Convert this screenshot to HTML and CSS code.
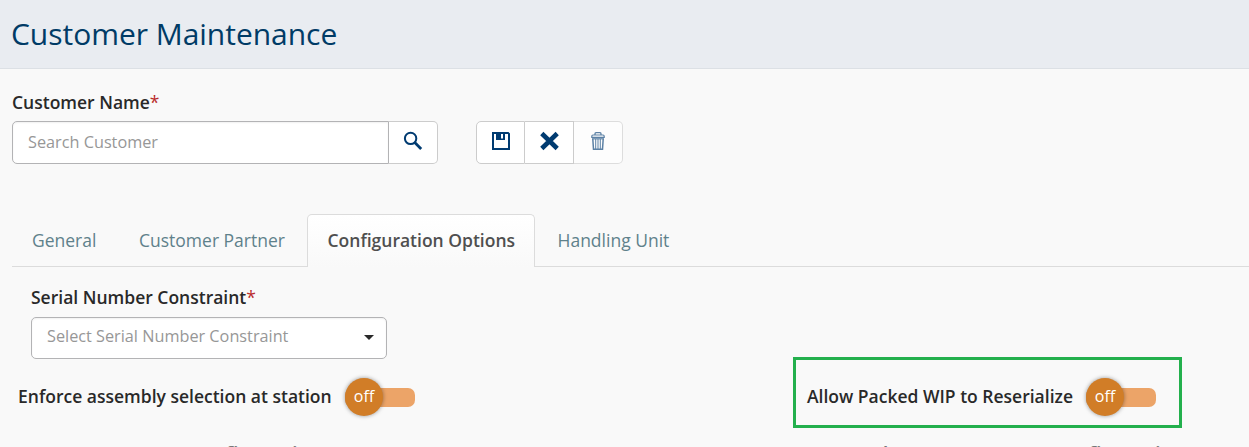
FILE: index.html
```
<!DOCTYPE html>
<html lang="en">
<head>
<meta charset="utf-8">
<title>Customer Maintenance</title>
<link rel="stylesheet" href="styles.css">
</head>
<body>
<header class="page-header"><h1 class="title">Customer Maintenance</h1></header>
<main class="content">
  <label class="label name-label"><span>Customer Name</span><span class="required">*</span></label>
  <div class="toolbar">
    <div class="search">
      <div class="search-input"><span class="placeholder">Search Customer</span></div>
      <button class="btn search-btn" aria-label="Search"><svg width="20" height="20" viewBox="0 0 20 20" fill="none" stroke="#003b71"><circle cx="7.6" cy="7.4" r="5.7" stroke-width="2"/><path d="M11.5 11.3L18.2 18" stroke-width="2.8"/></svg></button>
    </div>
    <div class="actions">
      <button class="btn" aria-label="Save"><svg width="18" height="18" viewBox="0 0 18 18"><path fill="#003b71" fill-rule="evenodd" d="M0 0H16.5L18 1.5V18H0ZM2 2V16H16V2H13V8H4V2ZM9 2V6.5H11V2Z"/></svg></button>
      <button class="btn" aria-label="Clear"><svg width="20" height="20" viewBox="0 0 20 20"><path d="M2.8 2.5L18.2 17.5M18.2 2.5L2.8 17.5" stroke="#003b71" stroke-width="4.6"/></svg></button>
      <button class="btn disabled" aria-label="Delete"><svg width="14" height="18" viewBox="0 0 14 18" fill="none" stroke="#5c81a5"><path d="M4 3V1.7Q4 .7 5 .7H9Q10 .7 10 1.7V3" stroke-width="1.3"/><path d="M.8 5.3V4.3Q.8 3 2 3H12Q13.2 3 13.2 4.3V5.3Z" stroke-width="1.2"/><path d="M1.8 7L2.5 17.2H11.5L12.2 7" stroke-width="1.5"/><path d="M1 6.8H13" stroke-width="1.2"/><path d="M4.7 7V17M7 7V17M9.3 7V17" stroke-width="1"/></svg></button>
    </div>
  </div>
  <nav class="tabs">
    <a class="tab">General</a>
    <a class="tab">Customer Partner</a>
    <a class="tab active">Configuration Options</a>
    <a class="tab">Handling Unit</a>
  </nav>
  <section class="panel">
    <label class="label serial-label"><span>Serial Number Constraint</span><span class="required">*</span></label>
    <div class="select"><span class="placeholder">Select Serial Number Constraint</span><i class="caret"></i></div>
  </section>
</main>
<section class="options">
  <div class="option left"><span class="label">Enforce assembly selection at station</span><div class="switch"><span class="knob">off</span></div></div>
  <div class="option highlighted"><span class="label">Allow Packed WIP to Reserialize</span><div class="switch"><span class="knob">off</span></div></div>
</section>
<section class="groups">
  <h2 class="group first">Configuration</h2>
  <h2 class="group second">Package</h2>
  <h2 class="group third">Configuration</h2>
</section>
</body>
</html>
```
FILE: styles.css
```
* { box-sizing: border-box; }
body {
  margin: 0;
  width: 1249px;
  height: 447px;
  overflow: hidden;
  background: #f9f9f9;
  color: #292929;
  font-family: "Open Sans", sans-serif;
}
.page-header {
  height: 69px;
  padding: 13px 0 0 11px;
  background: #e9ecf1;
  border-bottom: 1px solid #dce0e5;
}
.title {
  margin: 0;
  color: #003b66;
  font-size: 30px;
  line-height: 42px;
  font-weight: 400;
  letter-spacing: -0.03px;
}
.content { padding-left: 12px; }
.label {
  display: block;
  font-size: 17.5px;
  line-height: 24px;
  font-weight: 600;
  white-space: nowrap;
}
.name-label { padding-top: 21px; height: 52px; }
.required { color: #b92c2c; font-weight: 400; }
.toolbar { display: flex; gap: 38px; height: 43px; }
.search { display: flex; width: 426px; }
.search-input {
  width: 377px;
  padding: 9px 15px;
  background: #fff;
  border: 1px solid #b3b3b5;
  border-radius: 5px 0 0 5px;
  box-shadow: inset 0 1px 2px #0000000f;
}
.placeholder {
  display: block;
  color: #979797;
  font-size: 16.25px;
  line-height: 22px;
  white-space: nowrap;
}
.btn {
  display: flex;
  align-items: center;
  justify-content: center;
  width: 49px;
  height: 43px;
  padding: 0 0 4px;
  background: #fff;
  border: 1px solid #ccc;
  border-left: 0;
}
.search-btn { border-radius: 0 5px 5px 0; }
.actions { display: flex; }
.actions .btn:first-child { border-left: 1px solid #ccc; border-radius: 5px 0 0 5px; }
.actions .disabled { border-color: #ddd; border-radius: 0 5px 5px 0; background: #fdfdfd; }
.tabs {
  display: flex;
  height: 53px;
  margin-top: 50px;
  background: linear-gradient(#dcdcdc, #dcdcdc) bottom / 100% 1px no-repeat;
}
.tab {
  height: 53px;
  padding: 13px 20px 0;
  border: 1px solid transparent;
  border-bottom: 0;
  color: #5f818b;
  font-size: 17.5px;
  line-height: 24px;
  white-space: nowrap;
}
.tab:nth-child(1) { width: 107px; padding-left: 19px; }
.tab:nth-child(2) { width: 188px; padding-left: 19px; }
.tab.active {
  width: 228px;
  padding-left: 19.5px;
  color: #4f4f4f;
  font-weight: 600;
  background: linear-gradient(#fff, #f9f9f9);
  border-color: #dcdcdc;
  border-radius: 5px 5px 0 0;
}
.tab:nth-child(4) { padding-left: 21.5px; }
.panel { padding: 18px 0 0 19px; }
.serial-label { height: 32px; }
.select {
  display: flex;
  justify-content: space-between;
  width: 356px;
  height: 42px;
  padding: 7px 12px 0 15px;
  background: #fff;
  border: 1px solid #b3b3b5;
  border-radius: 5px;
  box-shadow: inset 0 1px 2px #0000000f;
}
.caret {
  width: 10px;
  height: 5px;
  margin-top: 10px;
  background: #292929;
  clip-path: polygon(0 0, 100% 0, 50% 100%);
}
.options { display: flex; height: 69px; margin-top: -2px; }
.option { display: flex; }
.option.left { width: 793px; padding: 20px 0 0 18px; }
.option.left .label { width: 327px; padding-top: 7px; }
.option.highlighted {
  width: 389px;
  height: 71px;
  padding: 17px 0 0 11px;
  border: 3px solid #23b04d;
}
.highlighted .label { width: 279px; padding-top: 7px; }
.switch {
  width: 70px;
  height: 19px;
  margin-top: 11px;
  border-radius: 7px;
  background: #eca468;
}
.knob {
  display: block;
  width: 38px;
  height: 38px;
  margin-top: -10px;
  border-radius: 50%;
  background: #d17d27;
  box-shadow: 0 0 4px #0006;
  color: #fff;
  font-size: 16px;
  line-height: 36px;
  text-align: center;
}
.groups { display: flex; margin-top: 13px; height: 8px; }
.group {
  margin: 0;
  color: #777;
  font-size: 20.5px;
  line-height: 28px;
  font-weight: 600;
  white-space: nowrap;
}
.first { width: 670px; padding-left: 187px; }
.second { width: 200px; padding-left: 178px; }
.third { padding-left: 180px; }
```
